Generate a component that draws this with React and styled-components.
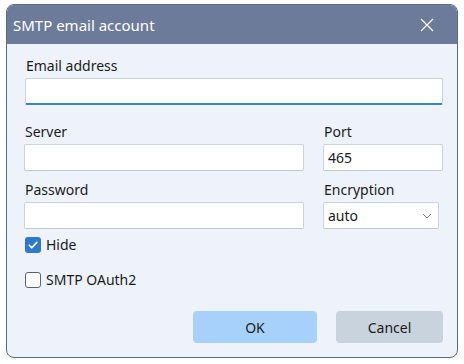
import React from "react";
import styled, { createGlobalStyle } from "styled-components";

const Global = createGlobalStyle`
  html, body {
    margin: 0;
    padding: 0;
    background: #ffffff;
  }
  body {
    font-family: "Noto Sans", "Open Sans", sans-serif;
  }
`;

const Page = styled.div`
  padding: 4px 6px 6px 6px;
  width: 452px;
`;

const Window = styled.div`
  width: 452px;
  height: 354px;
  box-sizing: border-box;
  border: 1.5px solid #5f6b85;
  border-radius: 8px;
  overflow: hidden;
  background: #eef3fb;
  display: flex;
  flex-direction: column;
`;

const TitleBar = styled.div`
  height: 39px;
  background: #6c7b9a;
  display: flex;
  align-items: center;
  justify-content: space-between;
  padding: 0 22px 0 6px;
  color: #ffffff;
  font-size: 15px;
`;

const CloseBtn = styled.div`
  width: 16px;
  height: 16px;
  display: flex;
  align-items: center;
  justify-content: center;
`;

const Body = styled.div`
  flex: 1;
  padding: 12px 14px 14px 17px;
  display: flex;
  flex-direction: column;
`;

const Label = styled.div`
  font-size: 14px;
  color: #1b1b1b;
  line-height: 19px;
  margin-left: ${(p) => p.$indent || 1}px;
  margin-bottom: 3px;
`;

const Input = styled.div`
  box-sizing: border-box;
  height: 27px;
  width: ${(p) => p.$width || "100%"};
  margin-left: ${(p) => (p.$inset ? 1 : 0)}px;
  background: #ffffff;
  border: 1px solid #cdd3db;
  border-bottom: ${(p) => (p.$focus ? "2px solid #3b82c4" : "1px solid #c3c9d1")};
  border-radius: 2px;
  font-size: 14px;
  color: #1b1b1b;
  display: flex;
  align-items: center;
  justify-content: space-between;
  padding: 0 6px 0 4px;
`;

const Grid = styled.div`
  display: grid;
  grid-template-columns: 280px 120px;
  column-gap: 19px;
  row-gap: 9px;
  margin-top: 17px;
`;

const Field = styled.div`
  display: flex;
  flex-direction: column;
`;

const CheckRow = styled.label`
  display: flex;
  align-items: center;
  gap: 5px;
  font-size: 14px;
  color: #1b1b1b;
  margin-top: ${(p) => p.$top}px;
  margin-left: 1px;
`;

const Box = styled.span`
  box-sizing: border-box;
  width: 16px;
  height: 16px;
  border-radius: 3px;
  border: ${(p) => (p.$checked ? "none" : "1.5px solid #5c6470")};
  background: ${(p) => (p.$checked ? "#2f78d0" : "#ffffff")};
  display: flex;
  align-items: center;
  justify-content: center;
`;

const Buttons = styled.div`
  margin-top: auto;
  display: flex;
  justify-content: flex-end;
  gap: 19px;
`;

const Button = styled.div`
  height: 32px;
  width: ${(p) => p.$width}px;
  border-radius: 4px;
  background: ${(p) => p.$bg};
  display: flex;
  align-items: center;
  justify-content: center;
  font-size: 14px;
  color: #1b1b1b;
`;

const Check = () => (
  <svg width="12" height="12" viewBox="0 0 12 12">
    <path d="M2.2 6.2 L4.9 8.8 L9.8 3.4" fill="none" stroke="#fff" strokeWidth="1.6" strokeLinecap="round" strokeLinejoin="round" />
  </svg>
);

const Chevron = () => (
  <svg width="10" height="6" viewBox="0 0 10 6">
    <path d="M1 1 L5 5 L9 1" fill="none" stroke="#7a8088" strokeWidth="1" />
  </svg>
);

export default function App() {
  return (
    <Page>
      <Global />
      <Window>
        <TitleBar>
          <span>SMTP email account</span>
          <CloseBtn>
            <svg width="14" height="14" viewBox="0 0 14 14">
              <path d="M1 1 L13 13 M13 1 L1 13" stroke="#fff" strokeWidth="1.3" />
            </svg>
          </CloseBtn>
        </TitleBar>
        <Body>
          <Field>
            <Label $indent={2}>Email address</Label>
            <Input $focus $inset $width="calc(100% - 1px)" />
          </Field>
          <Grid>
            <Field>
              <Label>Server</Label>
              <Input />
            </Field>
            <Field>
              <Label>Port</Label>
              <Input>465</Input>
            </Field>
            <Field>
              <Label>Password</Label>
              <Input />
            </Field>
            <Field>
              <Label>Encryption</Label>
              <Input $width="116px">
                <span>auto</span>
                <Chevron />
              </Input>
            </Field>
          </Grid>
          <CheckRow $top={6}>
            <Box $checked>
              <Check />
            </Box>
            Hide
          </CheckRow>
          <CheckRow $top={16}>
            <Box />
            SMTP OAuth2
          </CheckRow>
          <Buttons>
            <Button $width={124} $bg="#a7d0fb">OK</Button>
            <Button $width={107} $bg="#c9d3de">Cancel</Button>
          </Buttons>
        </Body>
      </Window>
    </Page>
  );
}
